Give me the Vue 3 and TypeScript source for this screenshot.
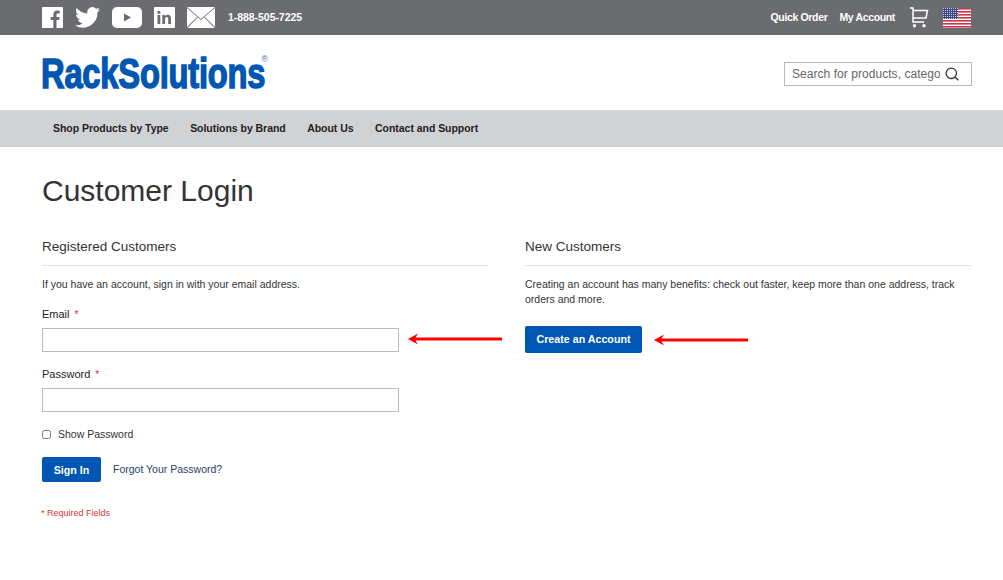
<script setup lang="ts">
const navItems: string[] = ['Shop Products by Type', 'Solutions by Brand', 'About Us', 'Contact and Support']
const stripes: number[] = [0, 1, 2, 3, 4, 5, 6]
</script>

<template>
  <div class="page">
    <div class="topbar">
      <div class="top-left">
        <svg class="ic" width="21" height="21" viewBox="0 0 21 21"><path fill="#fff" fill-rule="evenodd" d="M1 0h19a1 1 0 0 1 1 1v19a1 1 0 0 1-1 1h-5.500v-8h2.700l.4-3.100h-3.100V8c0-.9.3-1.500 1.600-1.500h1.600V3.700c-.3 0-1.300-.1-2.400-.1-2.400 0-4 1.500-4 4.100v2.200H8.600V13h2.700v8H1a1 1 0 0 1-1-1V1a1 1 0 0 1 1-1z"/></svg>
        <svg class="ic tw" width="25" height="21" viewBox="0 0 24 20"><path fill="#fff" d="M24 2.400c-.9.400-1.800.7-2.800.8 1-.6 1.800-1.600 2.200-2.700-1 .6-2 1-3.100 1.200A4.900 4.900 0 0 0 11.900 6.200C7.800 6 4.200 4 1.700.9c-1.300 2.200-.7 5.100 1.500 6.600-.8 0-1.600-.2-2.200-.6 0 2.400 1.700 4.500 3.900 5-.7.200-1.500.2-2.200.1.600 2 2.500 3.400 4.600 3.400A9.900 9.900 0 0 1 0 17.400 13.900 13.900 0 0 0 21.500 5c1-.7 1.800-1.600 2.500-2.600z"/></svg>
        <svg class="ic yt" width="30" height="21" viewBox="0 0 30 21"><path fill="#fff" fill-rule="evenodd" d="M5 0h20a5 5 0 0 1 5 5v11a5 5 0 0 1-5 5H5a5 5 0 0 1-5-5V5a5 5 0 0 1 5-5zm7 6.500v8l7-4z"/></svg>
        <svg class="ic li" width="21" height="21" viewBox="0 0 21 21"><path fill="#fff" fill-rule="evenodd" d="M1 0h19a1 1 0 0 1 1 1v19a1 1 0 0 1-1 1H1a1 1 0 0 1-1-1V1a1 1 0 0 1 1-1zm2.500 8v9h2.800V8zm1.400-4.300a1.600 1.600 0 1 0 0 3.200 1.600 1.600 0 0 0 0-3.200zM8.300 8v9h2.800v-4.700c0-1.300.5-2.200 1.600-2.200s1.500.9 1.500 2.200V17H17v-5.300c0-2.600-1.300-3.900-3.200-3.900-1.300 0-2.200.6-2.700 1.400V8z"/></svg>
        <svg class="ic mail" width="28" height="21" viewBox="0 0 28 21"><path fill="#fff" d="M0 0h28L14 12zM0 1v19L10.300 9.700zM28 1v19L17.700 9.700zM10.900 10.300l3.100 2.700 3.100-2.700L27.600 21H.4z"/></svg>
        <span class="phone">1-888-505-7225</span>
      </div>
      <div class="top-right">
        <a class="top-link">Quick Order</a>
        <a class="top-link acct">My Account</a>
        <svg class="cart" width="20" height="21" viewBox="0 0 20 21" fill="none" stroke="#fff" stroke-width="1.500"><path d="M1 1h3v14h11M4 3.500h14.500L17 11H4"/><circle cx="5.500" cy="18.800" r="1.700" fill="#fff" stroke="none"/><circle cx="15" cy="18.800" r="1.700" fill="#fff" stroke="none"/></svg>
        <svg class="flag" width="28" height="20" viewBox="0 0 28 20">
          <rect width="28" height="20" fill="#fff"/>
          <rect v-for="i in stripes" :key="i" x="0" :y="i * 3" width="28" height="1.600" fill="#c8364a"/>
          <rect width="15" height="11" fill="#3d4a80"/>
          <rect width="15" height="11" fill="url(#stars)"/>
          <defs><pattern id="stars" width="2" height="2" patternUnits="userSpaceOnUse"><rect width="1" height="1" fill="#c5c9dd"/></pattern></defs>
        </svg>
      </div>
    </div>

    <header class="header">
      <div class="logo"><span class="logo-text">RackSolutions</span><span class="reg">®</span></div>
      <div class="search">
        <input class="search-input" type="text" placeholder="Search for products, categories" />
        <svg width="14" height="14" viewBox="0 0 14 14" fill="none" stroke="#333" stroke-width="1.300"><circle cx="6.300" cy="6.300" r="5.200"/><path d="M10 10l3.300 3.300"/></svg>
      </div>
    </header>

    <nav class="nav">
      <a v-for="item in navItems" :key="item" class="nav-item">{{ item }}</a>
    </nav>

    <main class="main">
      <h1 class="title">Customer Login</h1>
      <div class="cols">
        <section class="col">
          <h2 class="col-title">Registered Customers</h2>
          <p class="copy">If you have an account, sign in with your email address.</p>
          <label class="label first">Email <span class="star">*</span></label>
          <div class="input-row">
            <input class="input" type="text" />
            <svg class="arrow" width="94" height="12" viewBox="0 0 94 12"><path fill="#f00" d="M0 6 10 .5 7.500 4.500H94v3H7.500L10 11.500z"/></svg>
          </div>
          <label class="label second">Password <span class="star">*</span></label>
          <input class="input" type="password" />
          <label class="check"><input type="checkbox" class="box" /><span>Show Password</span></label>
          <div class="actions">
            <button class="btn signin" type="button">Sign In</button>
            <a class="forgot">Forgot Your Password?</a>
          </div>
          <p class="required">* Required Fields</p>
        </section>
        <section class="col">
          <h2 class="col-title">New Customers</h2>
          <p class="copy">Creating an account has many benefits: check out faster, keep more than one address, track orders and more.</p>
          <div class="create-row">
            <button class="btn create" type="button">Create an Account</button>
            <svg class="arrow" width="94" height="12" viewBox="0 0 94 12"><path fill="#f00" d="M0 6 10 .5 7.500 4.500H94v3H7.500L10 11.500z"/></svg>
          </div>
        </section>
      </div>
    </main>
  </div>
</template>

<style>
html, body { margin: 0; background: #fff; }
</style>

<style scoped>
.page { width: 1003px; height: 580px; overflow: hidden; font-family: "Liberation Sans", Arial, sans-serif; color: #333; }
.topbar { height: 35px; background: #6b6c70; display: flex; justify-content: space-between; align-items: center; padding: 0 32px 0 42px; }
.top-left, .top-right { display: flex; align-items: center; }
.ic { display: block; }
.tw, .yt, .li, .mail { margin-left: 12px; }
.phone { margin-left: 13px; margin-bottom: 1px; color: #fff; font-size: 10.500px; font-weight: 700; letter-spacing: -0.05px; }
.top-link { color: #fff; font-size: 10.500px; font-weight: 700; letter-spacing: -0.35px; margin-bottom: 1px; }
.acct { margin-left: 12px; }
.cart { margin-left: 14px; }
.flag { margin-left: 14px; }
.header { height: 72px; display: flex; justify-content: space-between; align-items: center; padding: 3px 31px 0 42px; }
.logo { position: relative; width: 226px; height: 36px; margin-left: -1px; }
.logo-text { display: block; color: #0056b3; font-size: 42.500px; line-height: 36px; font-weight: 700; white-space: nowrap; transform: scaleX(0.77); transform-origin: left center; -webkit-text-stroke: 1.500px #0056b3; letter-spacing: -0.3px; }
.reg { position: absolute; right: -1px; top: -3px; font-size: 9px; line-height: 12px; color: #4a78b5; }
.search { height: 22px; width: 167px; border: 1px solid #b9b9b9; display: flex; align-items: center; padding: 0 12px 0 7px; }
.search-input { flex: 1; min-width: 0; border: 0; padding: 0; margin: 0 5px 0 0; outline: none; font-family: inherit; font-size: 12px; letter-spacing: 0.05px; background: transparent; }
.search-input::placeholder { color: #666; opacity: 1; }
.nav { height: 35px; padding: 0 0 2px 53px; background: #d1d2d4; display: flex; align-items: center; gap: 21.500px; }
.nav-item { font-size: 10.500px; font-weight: 700; color: #222; letter-spacing: -0.04px; }
.main { padding: 0 31px 0 42px; }
.title { margin: 27px 0 0; font-size: 30px; line-height: 34px; font-weight: 400; color: #333; }
.cols { display: grid; grid-template-columns: 446px 447px; column-gap: 37px; margin-top: 30px; }
.col-title { margin: 0; font-size: 13.500px; line-height: 18px; font-weight: 400; color: #333; padding-bottom: 9px; border-bottom: 1px solid #e4e4e4; }
.copy { margin: 11px 0 0; font-size: 10.500px; line-height: 15px; color: #333; }
.label { display: block; font-size: 11px; line-height: 14px; font-weight: 400; color: #222; }
.first { margin-top: 15px; }
.second { margin-top: 15px; }
.star { color: #e02b27; font-size: 10px; margin-left: 2px; }
.input-row { position: relative; margin-top: 6px; }
.input { display: block; width: 357px; height: 24px; box-sizing: border-box; border: 1px solid #bbb; background: #fff; padding: 0; margin: 0; outline: none; }
.second + .input { margin-top: 6px; }
.arrow { flex: none; display: block; }
.input-row .arrow { position: absolute; left: 366px; top: 5px; }
.check { display: flex; align-items: center; margin-top: 15px; font-size: 10.500px; line-height: 14px; color: #333; }
.box { width: 9px; height: 9px; margin: 0 7px 0 0; }
.actions { display: flex; align-items: center; margin-top: 16px; }
.btn { border: 0; background: #0056b3; color: #fff; font-family: inherit; font-size: 10.700px; font-weight: 700; border-radius: 2px; padding: 0; display: block; }
.signin { width: 59px; height: 25px; }
.forgot { margin-left: 12px; margin-bottom: 2px; font-size: 10.500px; color: #2c3e63; }
.required { margin: 25px 0 0 -1px; font-size: 9px; line-height: 12px; color: #d9363a; }
.create-row { display: flex; align-items: center; margin-top: 19px; }
.create { width: 117px; height: 27px; padding-bottom: 2px; }
.create-row .arrow { margin-left: 12px; }
</style>
